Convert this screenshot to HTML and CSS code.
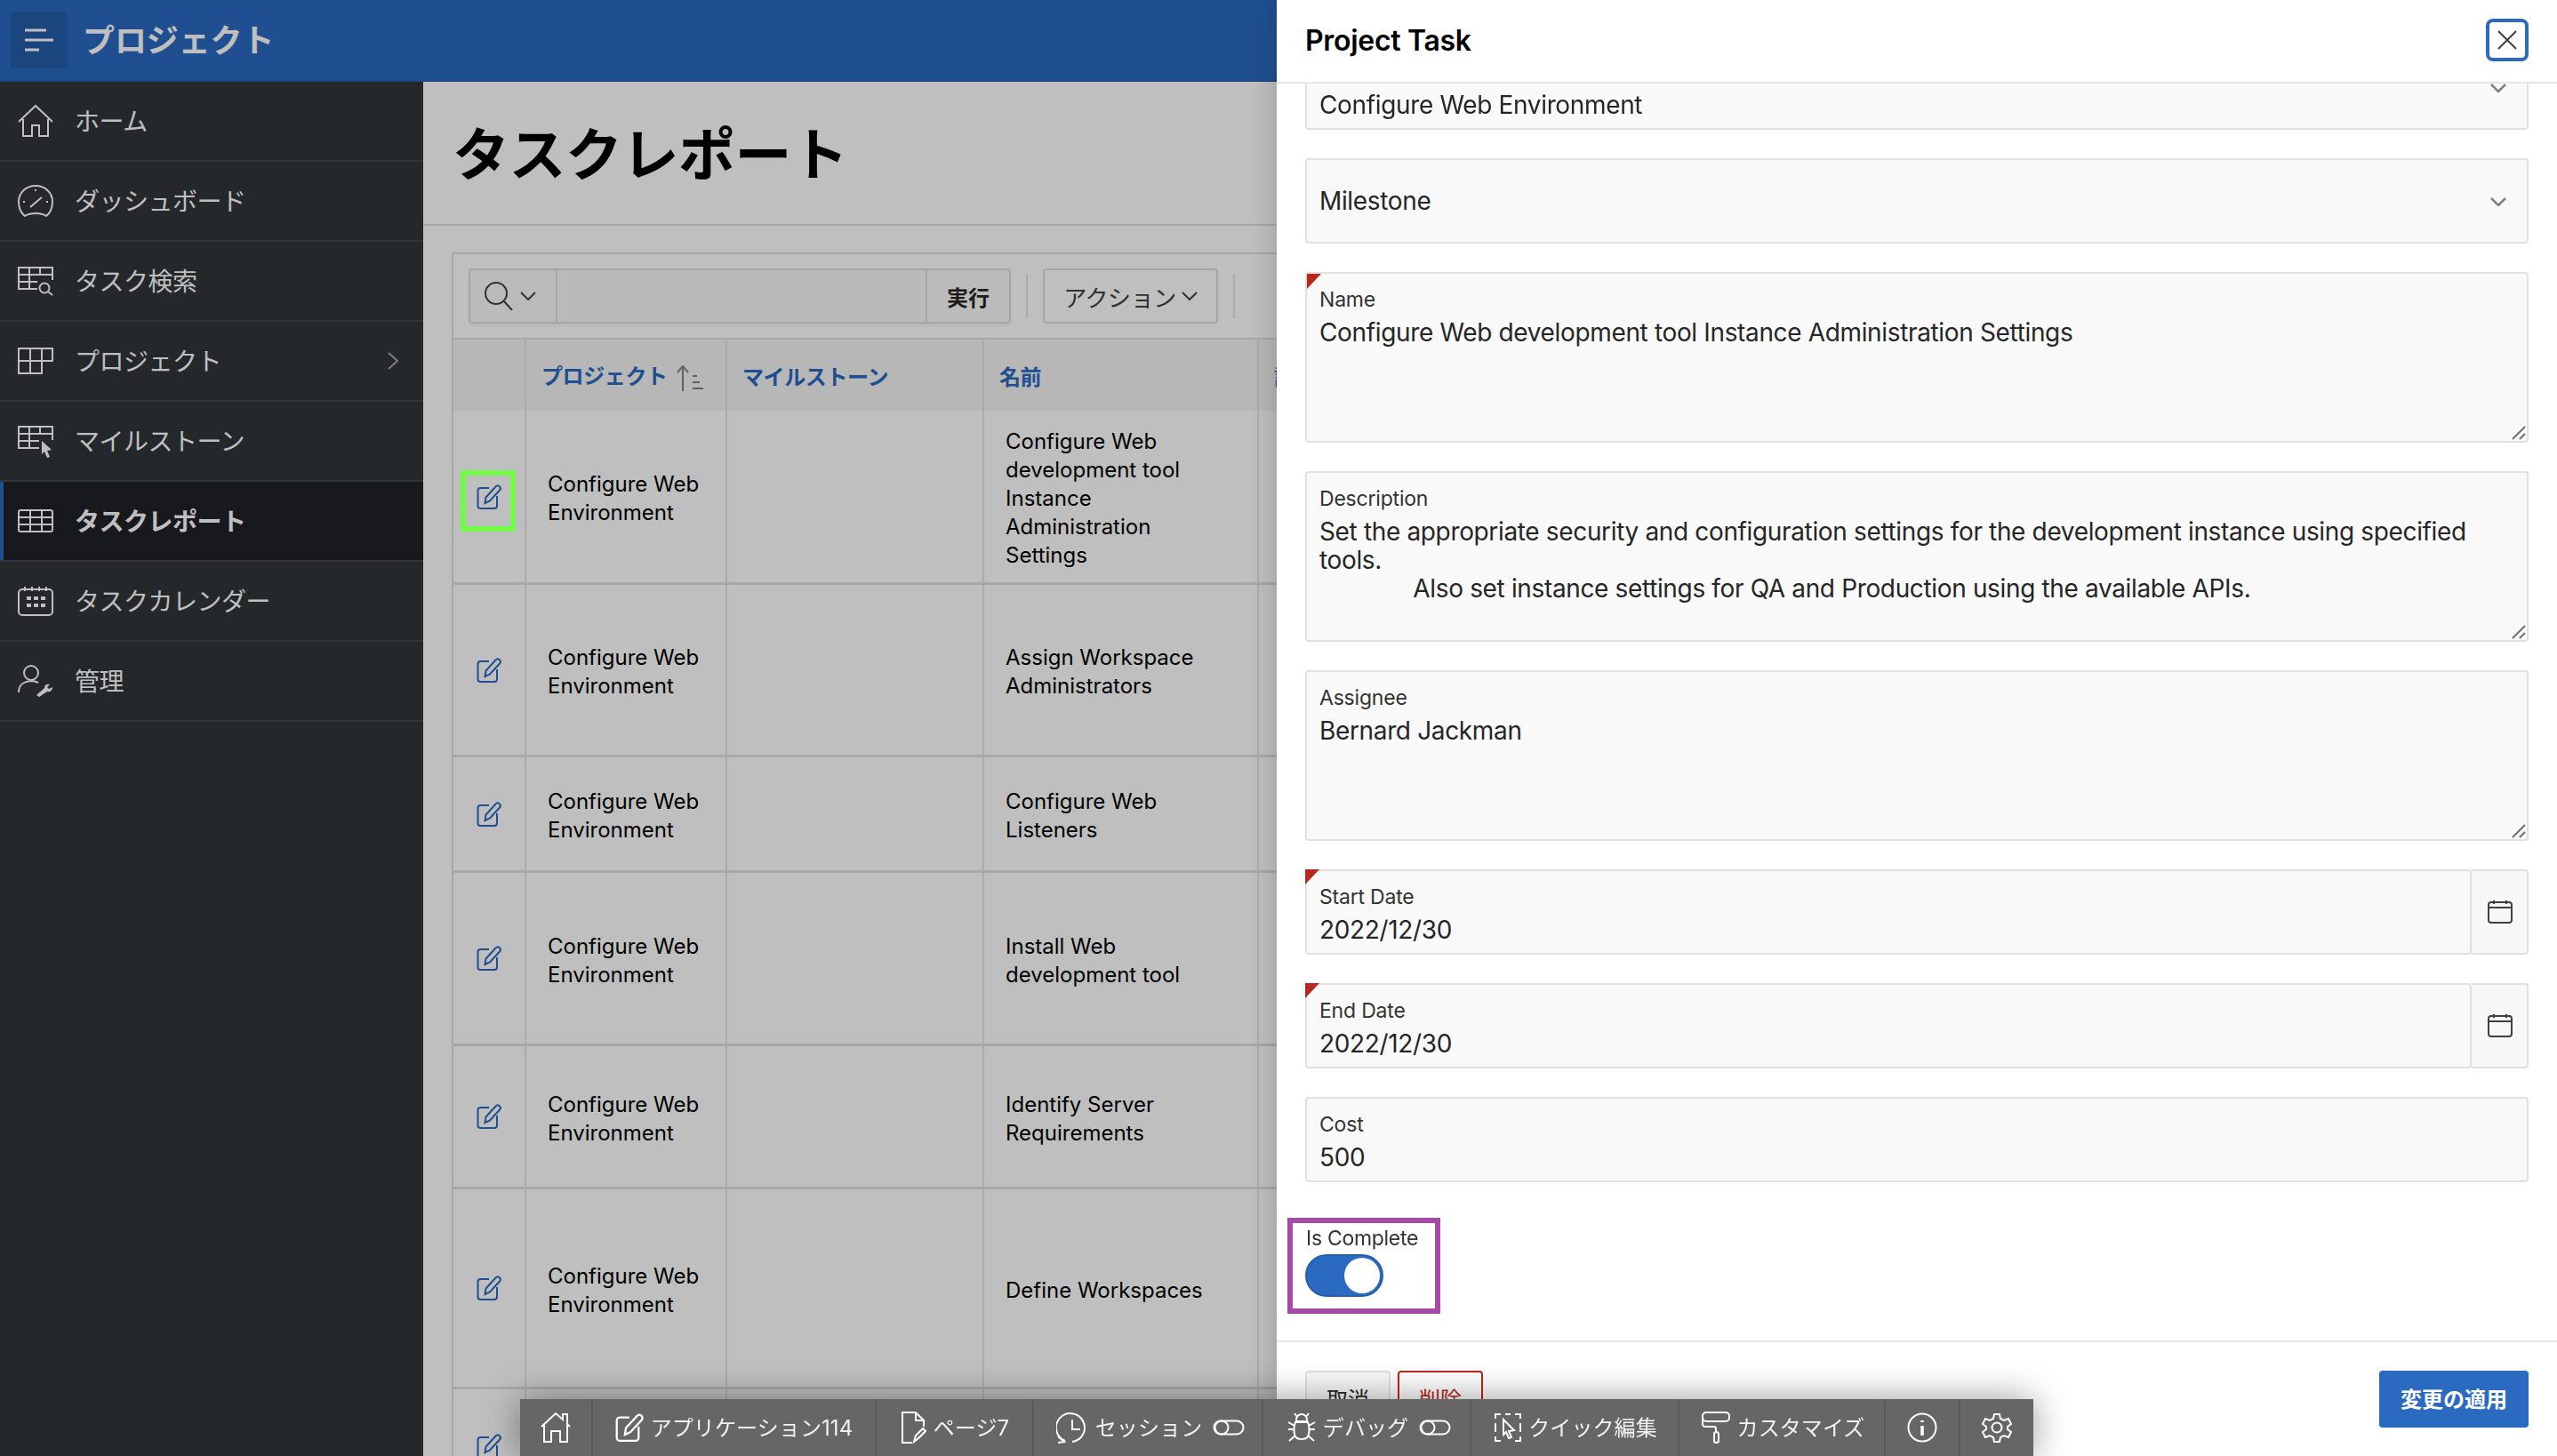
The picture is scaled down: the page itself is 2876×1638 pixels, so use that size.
FILE: index.html
```html
<!DOCTYPE html>
<html lang="ja">
<head>
<meta charset="utf-8">
<title>タスクレポート</title>
<link rel="stylesheet" href="styles.css">
</head>
<body>
<svg class="defs" width="0" height="0" aria-hidden="true">
  <symbol id="i-edit" viewBox="0 0 28 28"><path d="M14 4H4.500A3 3 0 0 0 1.500 7V24A3 3 0 0 0 4.500 27H20A3 3 0 0 0 23 24V13"/><path d="M9.500 21L10.500 14.500L21.500 2.500A2.500 2.500 0 0 1 26 6.500L15 18.500Z"/></symbol>
  <symbol id="i-switch" viewBox="0 0 36 20"><rect x="1.500" y="2.500" width="33" height="15" rx="7.500"/><circle cx="10" cy="10" r="7.500"/></symbol>
  <symbol id="i-cal" viewBox="0 0 28 28"><rect x="1" y="3" width="26" height="23" rx="3"/><path d="M1 9H27M7 1V5M21 1V5"/></symbol>
  <symbol id="i-chev" viewBox="0 0 18 10"><path d="M1 1L9 9L17 1"/></symbol>
</svg>
<div class="app">
  <header class="topbar">
    <button class="menu-btn" type="button"><svg class="ico bars" width="32" height="26" viewBox="0 0 32 26"><path d="M0 2H24M0 13H32M0 24H16"/></svg></button>
    <span class="app-name">プロジェクト</span>
  </header>
  <div class="body">
    <nav class="side">
      <a class="nav"><svg class="ico" width="40" height="40" viewBox="0 0 40 40"><path d="M1 21L20 3L39 21M6 18V37H16V25H24V37H34V18"/></svg><span>ホーム</span></a>
      <a class="nav"><svg class="ico" width="40" height="40" viewBox="0 0 40 40"><path d="M8 37C3 33 1 27 1 21C1 11 9 3 20 3C31 3 39 11 39 21C39 27 37 33 32 37C26 33 14 33 8 37Z"/><path d="M14 27L27 16M20 7V9M6 21H8M32 21H34"/></svg><span>ダッシュボード</span></a>
      <a class="nav"><svg class="ico" width="40" height="40" viewBox="0 0 40 40"><path d="M39 19V5H1V29H22M1 13H39M1 21H22M13 5V29M25 5V13"/><circle cx="30" cy="28" r="5.500"/><path d="M34 32L39 36"/></svg><span>タスク検索</span></a>
      <a class="nav"><svg class="ico" width="40" height="40" viewBox="0 0 40 40"><path d="M27 20H39V6H1V34H27V6M1 20H27M14 6V34"/></svg><span>プロジェクト</span><svg class="ico nav-arrow" width="12" height="20" viewBox="0 0 12 20"><path d="M1 1L11 10L1 19"/></svg></a>
      <a class="nav"><svg class="ico" width="40" height="40" viewBox="0 0 40 40"><path d="M39 19V4H1V28H24M1 12H39M1 20H24M13 4V28M25 4V12"/><path class="solid" d="M27 20L38 30L33 31L36 38L33 39L30 32L27 35Z"/></svg><span>マイルストーン</span></a>
      <a class="nav active"><svg class="ico" width="40" height="40" viewBox="0 0 40 40"><rect x="1" y="8" width="38" height="24" rx="2"/><path d="M1 16H39M1 24H39M14 8V32M27 8V32"/></svg><span>タスクレポート</span></a>
      <a class="nav"><svg class="ico" width="40" height="40" viewBox="0 0 40 40"><rect x="1" y="7" width="38" height="29" rx="4"/><path d="M8 4V9M16 4V9M24 4V9M32 4V9"/><path class="dots" d="M10 17H15M18 17H23M26 17H31M10 25H15M18 25H23M26 25H31"/></svg><span>タスクカレンダー</span></a>
      <a class="nav"><svg class="ico" width="40" height="40" viewBox="0 0 40 40"><circle cx="15" cy="11" r="8"/><path d="M1 33C1 25 5 21 15 20C19 20 21 21 23 22"/><path class="solid" d="M21 36L30 28C30 24 33 23 36 24L33 27L35 29L39 27C39 31 36 33 33 32L24 38Z"/></svg><span>管理</span></a>
    </nav>
    <main class="main">
      <div class="hero"><h1>タスクレポート</h1></div>
      <section class="report">
        <div class="toolbar">
          <div class="searchbar">
            <div class="sb-col"><svg class="ico-dark" width="32" height="32" viewBox="0 0 32 32"><circle cx="13" cy="13" r="12"/><path d="M22 22L31 32"/></svg><svg class="ico-dark" width="18" height="10"><use href="#i-chev"/></svg></div>
            <div class="sb-input"></div>
            <div class="sb-go">実行</div>
          </div>
          <span class="tb-sep"></span>
          <div class="actions">アクション<svg class="ico-dark" width="18" height="10"><use href="#i-chev"/></svg></div>
          <span class="tb-sep"></span>
        </div>
        <table class="grid">
          <colgroup><col class="c0"><col class="c1"><col class="c2"><col class="c3"><col class="c4"></colgroup>
          <thead>
            <tr><th></th><th>プロジェクト<svg class="sort" width="32" height="30" viewBox="0 0 32 30"><path d="M9 29V2M3 8L9 1L15 8M20 12H25M20 19H28M20 26H32"/></svg></th><th>マイルストーン</th><th>名前</th><th>説明</th></tr>
          </thead>
          <tbody>
            <tr class="r1"><td class="ed"><svg class="edit" width="28" height="28"><use href="#i-edit"/></svg></td><td>Configure Web Environment</td><td></td><td>Configure Web development tool Instance Administration Settings</td><td></td></tr>
            <tr class="r2"><td class="ed"><svg class="edit" width="28" height="28"><use href="#i-edit"/></svg></td><td>Configure Web Environment</td><td></td><td>Assign Workspace Administrators</td><td></td></tr>
            <tr class="r3"><td class="ed"><svg class="edit" width="28" height="28"><use href="#i-edit"/></svg></td><td>Configure Web Environment</td><td></td><td>Configure Web Listeners</td><td></td></tr>
            <tr class="r4"><td class="ed"><svg class="edit" width="28" height="28"><use href="#i-edit"/></svg></td><td>Configure Web Environment</td><td></td><td>Install Web development tool</td><td></td></tr>
            <tr class="r5"><td class="ed"><svg class="edit" width="28" height="28"><use href="#i-edit"/></svg></td><td>Configure Web Environment</td><td></td><td>Identify Server Requirements</td><td></td></tr>
            <tr class="r6"><td class="ed"><svg class="edit" width="28" height="28"><use href="#i-edit"/></svg></td><td>Configure Web Environment</td><td></td><td>Define Workspaces</td><td></td></tr>
            <tr class="r7"><td class="ed"><svg class="edit" width="28" height="28"><use href="#i-edit"/></svg></td><td></td><td></td><td></td><td></td></tr>
          </tbody>
        </table>
      </section>
    </main>
  </div>
</div>

<div class="scrim"></div>

<aside class="drawer">
  <div class="dr-head">
    <h2>Project Task</h2>
    <button class="close" type="button"><svg class="ico-dark" width="22" height="22" viewBox="0 0 22 22"><path d="M1 1L21 21M21 1L1 21"/></svg></button>
  </div>
  <div class="dr-body">
    <div class="form">
      <div class="field select first"><span class="val">Configure Web Environment</span><svg class="chev" width="18" height="10"><use href="#i-chev"/></svg></div>
      <div class="field select"><span class="val">Milestone</span><svg class="chev" width="18" height="10"><use href="#i-chev"/></svg></div>
      <div class="field area req"><label>Name</label><div class="val">Configure Web development tool Instance Administration Settings</div><svg class="grip" width="16" height="16" viewBox="0 0 16 16"><path d="M15 1L1 15M15 9L9 15"/></svg></div>
      <div class="field area"><label>Description</label><div class="val pre">Set the appropriate security and configuration settings for the development instance using specified tools.
              Also set instance settings for QA and Production using the available APIs.</div><svg class="grip" width="16" height="16" viewBox="0 0 16 16"><path d="M15 1L1 15M15 9L9 15"/></svg></div>
      <div class="field area"><label>Assignee</label><div class="val">Bernard Jackman</div><svg class="grip" width="16" height="16" viewBox="0 0 16 16"><path d="M15 1L1 15M15 9L9 15"/></svg></div>
      <div class="datewrap req"><div class="field date"><label>Start Date</label><div class="val">2022/12/30</div></div><div class="cal"><svg class="ico-dark" width="28" height="28"><use href="#i-cal"/></svg></div></div>
      <div class="datewrap req"><div class="field date"><label>End Date</label><div class="val">2022/12/30</div></div><div class="cal"><svg class="ico-dark" width="28" height="28"><use href="#i-cal"/></svg></div></div>
      <div class="field text"><label>Cost</label><div class="val">500</div></div>
      <div class="switch-f"><label>Is Complete</label><span class="toggle"><span class="knob"></span></span></div>
    </div>
  </div>
  <div class="dr-foot">
    <div class="foot-l"><button class="btn" type="button">取消</button><button class="btn danger" type="button">削除</button></div>
    <button class="btn primary" type="button">変更の適用</button>
  </div>
</aside>

<div class="mark mark-green"></div>
<div class="mark mark-purple"></div>

<div class="devbar">
  <a class="dv w-home"><svg class="dico" width="36" height="36" viewBox="0 0 36 36"><path d="M2 17L18 2L26 9V3H31V14L34 17M5 15V34H13V22H23V34H31V15"/></svg></a>
  <a class="dv w-app"><svg class="dico" width="32" height="36" viewBox="0 0 32 36"><use href="#i-edit"/></svg><span>アプリケーション114</span></a>
  <a class="dv w-page"><svg class="dico" width="30" height="36" viewBox="0 0 30 36"><path d="M18 1H3V35H14M18 1L27 10V17M18 1V10H27"/><path d="M16 34L18 27L26 19L29 22L21 30Z"/></svg><span>ページ7</span></a>
  <a class="dv w-sess"><svg class="dico" width="36" height="36" viewBox="0 0 36 36"><path d="M10 33A16 16 0 1 1 18 34M2 28L9 34L2 35M18 9V20H27"/></svg><span>セッション</span><svg class="dico sw" width="36" height="20"><use href="#i-switch"/></svg></a>
  <a class="dv w-dbg"><svg class="dico" width="32" height="36" viewBox="0 0 32 36"><path d="M10 9A6 6 0 0 1 22 9V11H10ZM9 12H23C25 16 25 25 23 28C21 32 11 32 9 28C7 25 7 16 9 12ZM8 2L11 6M24 2L21 6M1 12L8 16M31 12L24 16M1 20H7M31 20H25M2 33L9 27M30 33L23 27"/></svg><span>デバッグ</span><svg class="dico sw" width="36" height="20"><use href="#i-switch"/></svg></a>
  <a class="dv w-quick"><svg class="dico" width="30" height="34" viewBox="0 0 30 34"><path d="M1 7V2H7M12 2H18M23 2H29V7M1 12V22M29 12V22M1 27V32H7M23 32H29V27"/><path d="M10 8L22 20L16 21L19 28L16 29L13 22L10 25Z"/></svg><span>クイック編集</span></a>
  <a class="dv w-cust"><svg class="dico" width="32" height="36" viewBox="0 0 32 36"><rect x="1" y="1" width="30" height="10" rx="4"/><path d="M1 6V14C1 16 3 17 5 17H14C15 17 16 18 16 20V23"/><rect x="14" y="23" width="5" height="12" rx="2.500"/></svg><span>カスタマイズ</span></a>
  <a class="dv w-info"><svg class="dico" width="34" height="34" viewBox="0 0 34 34"><circle cx="17" cy="17" r="15.500"/><path class="fat" d="M17 9V11M17 15V26"/></svg></a>
  <a class="dv w-set"><svg class="dico" width="34" height="34" viewBox="0 0 34 34"><circle cx="17" cy="17" r="5.500"/><path d="M14 2H20L21 7L25 9L30 7L33 13L29 16V19L33 22L30 28L25 26L21 28L20 33H14L13 28L9 26L4 28L1 22L5 19V16L1 13L4 7L9 9L13 7Z"/></svg></a>
</div>
</body>
</html>
```
FILE: styles.css
```css
* { box-sizing: border-box; }
html, body { margin: 0; height: 100%; overflow: hidden; }
body { font-family: Inter, "Noto Sans CJK JP", sans-serif; color: #000; background: #fff; }
.defs { position: absolute; }
a { display: flex; }
button { font: inherit; }

svg { fill: none; flex: none; }
.ico, .ico-dark, .edit, .chev, .sort, .dico, .grip { fill: none; stroke-width: 2; }
.ico { stroke: #fff; }
.ico.bars { stroke-width: 3; }
.ico-dark { stroke: #404040; }
.ico .solid { fill: #fff; stroke: none; }
.ico .dots { stroke-width: 4; }
.dico { stroke: #fff; stroke-width: 2; }
.dico .fat { stroke-width: 3.5; }

.app { width: 2876px; height: 1638px; display: flex; flex-direction: column; }
.topbar { height: 92px; flex: none; background: #2a6ac0; display: flex; align-items: center; padding: 0 12px; gap: 17px; border-bottom: 2px solid #2662b2; }
.menu-btn { width: 64px; height: 64px; background: #245da8; border: 0; border-radius: 4px; display: flex; align-items: center; justify-content: center; padding: 0; }
.app-name { color: #fff; font-size: 36px; font-weight: 700; padding-bottom: 5px; letter-spacing: -.1px; }

.body { flex: 1; display: flex; min-height: 0; }
.side { width: 476px; flex: none; background: #30363a; }
.nav { height: 90px; align-items: center; padding: 0 20px; gap: 24px; color: #fff; font-size: 28px; letter-spacing: -.5px; border-bottom: 2px solid #42484d; position: relative; }
.nav span { flex: 1; padding-bottom: 3px; }
.nav-arrow { stroke: #a6a6a6; margin-right: 8px; }
.nav.active { background: #1f2227; font-weight: 700; box-shadow: inset 4px 0 0 #2a6ac0; }

.main { flex: 1; min-width: 0; overflow: hidden; background: #fff; }
.hero { height: 162px; border-bottom: 2px solid #e0e0e0; padding-left: 33px; display: flex; align-items: center; }
.hero h1 { margin: 0; font-size: 64px; font-weight: 700; line-height: 1; padding-top: 3px; letter-spacing: -.5px; }

.report { margin: 30px 0 0 32px; border: 2px solid #e0e0e0; border-right: 0; }
.toolbar { height: 96px; display: flex; align-items: center; padding: 0 0 0 17px; gap: 17px; border-bottom: 2px solid #e0e0e0; }
.searchbar { width: 610px; height: 62px; display: flex; border: 2px solid #dcdcdc; border-radius: 4px; box-shadow: 0 2px 3px rgba(0,0,0,.06); background: #fafafa; }
.sb-col { width: 98px; display: flex; align-items: center; padding-left: 16px; gap: 8px; border-right: 2px solid #dcdcdc; }
.sb-input { flex: 1; background: #f8f8f8; }
.sb-go { width: 94px; border-left: 2px solid #dcdcdc; display: flex; align-items: center; justify-content: center; font-size: 24px; font-weight: 600; color: #262626; }
.tb-sep { width: 2px; height: 50px; background: #e4e4e4; }
.actions { width: 197px; height: 62px; display: flex; align-items: center; justify-content: center; gap: 6px; border: 2px solid #dcdcdc; border-radius: 4px; font-size: 26px; letter-spacing: -.4px; color: #404040; }

.grid { width: 1100px; border-collapse: collapse; table-layout: fixed; font-size: 24px; line-height: 32px; }
.c0 { width: 81px; } .c1 { width: 226px; } .c2 { width: 289px; } .c3 { width: 309px; } .c4 { width: 195px; }
.grid th { height: 80px; background: #f5f5f5; text-align: left; font-size: 24px; font-weight: 700; letter-spacing: -.4px; color: #2a6ac0; padding: 5px 0 0 17px; border-left: 2px solid #e4e4e4; white-space: nowrap; vertical-align: middle; }
.grid th:first-child, .grid td:first-child { border-left: 0; }
.grid td { padding: 6px 20px 0 24px; border-left: 2px solid #e4e4e4; border-bottom: 3px solid #e0e0e0; vertical-align: middle; }
.grid td:nth-child(4) { padding-right: 40px; }
.grid td.ed { padding: 1px 0 0; text-align: center; }
.sort { stroke: #808080; vertical-align: middle; margin-left: 8px; }
.edit { stroke: #2a6ac0; display: block; margin: 0 auto; }
.r1 { height: 194px; } .r2 { height: 194px; } .r3 { height: 130px; } .r4 { height: 195px; } .r5 { height: 161px; } .r6 { height: 225px; } .r7 { height: 130px; }

.scrim { position: fixed; inset: 0; background: rgba(0,0,0,.25); }

.drawer { position: fixed; top: 0; right: 0; bottom: 0; width: 1440px; background: #fff; box-shadow: 0 0 32px rgba(0,0,0,.22); display: flex; flex-direction: column; }
.dr-head { height: 94px; flex: none; position: relative; z-index: 2; background: #fff; display: flex; align-items: center; justify-content: space-between; padding: 0 32px; border-bottom: 2px solid #e6e6e6; }
.dr-head h2 { margin: 0; font-size: 32px; font-weight: 600; letter-spacing: -.3px; color: #000; padding-bottom: 2px; }
.close { width: 48px; height: 48px; border: 4px solid #2a6ac0; border-radius: 8px; background: #fff; padding: 0; display: flex; align-items: center; justify-content: center; margin-bottom: 2px; }
.dr-body { flex: 1; min-height: 0; overflow: hidden; }
.form { margin-top: -44px; padding: 0 32px; display: flex; flex-direction: column; gap: 32px; }
.field { position: relative; background: #f9f9f9; border: 2px solid #e0e0e0; border-radius: 4px; padding: 0 14px; color: #262626; }
.field label { display: block; font-size: 23px; letter-spacing: -.2px; line-height: 30px; color: #333; padding-top: 14px; }
.val { font-size: 28px; letter-spacing: -.35px; line-height: 32px; }
.pre { white-space: pre-wrap; }
.field .val { margin-top: 6px; }
.select { height: 96px; display: flex; align-items: center; }
.select .val { margin-top: 0; }
.first .val { margin-top: 40px; }
.chev { stroke: #808080; position: absolute; right: 23px; top: 42px; stroke-width: 2.500; }
.area { height: 192px; }
.grip { stroke: #707070; position: absolute; right: 1px; bottom: 1px; }
.text { height: 96px; }
.datewrap { height: 96px; display: flex; position: relative; }
.date { flex: 1; height: 96px; }
.cal { width: 64px; background: #f7f7f7; border: 2px solid #e0e0e0; border-left: 0; border-radius: 0 4px 4px 0; display: flex; align-items: center; justify-content: center; padding-left: 2px; }
.req::before { content: ""; position: absolute; left: 0; top: 0; z-index: 1; width: 0; height: 0; border-style: solid; border-width: 17px 16px 0 0; border-color: #b8281c transparent transparent transparent; }
.switch-f { margin-top: 16px; }
.switch-f label { display: block; font-size: 23px; letter-spacing: -.3px; line-height: 30px; color: #333; padding-left: 1px; }
.toggle { display: flex; width: 88px; height: 48px; border-radius: 24px; background: #2a6ac0; border: 2px solid #2560ad; align-items: center; justify-content: flex-end; padding-right: 2px; margin-top: 3px; }
.knob { width: 40px; height: 40px; border-radius: 50%; background: #fff; }
.dr-foot { position: absolute; left: 0; right: 0; top: 1508px; height: 130px; border-top: 2px solid #e6e6e6; background: #fff; padding: 32px 32px 0; display: flex; justify-content: space-between; align-items: flex-start; }
.foot-l { display: flex; gap: 8px; }
.btn { height: 64px; width: 96px; border: 2px solid #e0e0e0; border-radius: 4px; background: #f8f8f8; font-size: 24px; color: #262626; padding: 0 0 3px; }
.danger { background: #fff; border-color: #b8281c; color: #b8281c; }
.primary { width: 168px; background: #2a6ac0; border-color: #2a6ac0; color: #fff; font-weight: 600; }

.mark { position: fixed; }
.mark-green { left: 518px; top: 529px; width: 62px; height: 69px; border: 6px solid #74fb4a; }
.mark-purple { left: 1448px; top: 1370px; width: 172px; height: 108px; border: 6px solid #a54aa5; }

.devbar { position: fixed; left: 585px; bottom: 0; height: 64px; display: flex; background: #666; color: #f2f2f2; font-size: 24px; box-shadow: 0 0 40px rgba(0,0,0,.4); }
.dv { height: 64px; align-items: center; justify-content: center; gap: 8px; border-right: 2px solid #5a5a5a; white-space: nowrap; }
.dv:last-child { border-right: 0; }
.dv span { padding-bottom: 3px; letter-spacing: .1px; }
.sw { margin-left: 4px; }
.w-home { width: 82px; } .w-app { width: 319px; } .w-page { width: 177px; } .w-sess { width: 258px; padding-left: 6px; } .w-dbg { width: 234px; padding-left: 6px; } .w-quick { width: 234px; padding-left: 3px; } .w-cust { width: 232px; padding-left: 3px; } .w-info { width: 84px; } .w-set { width: 82px; }
```
